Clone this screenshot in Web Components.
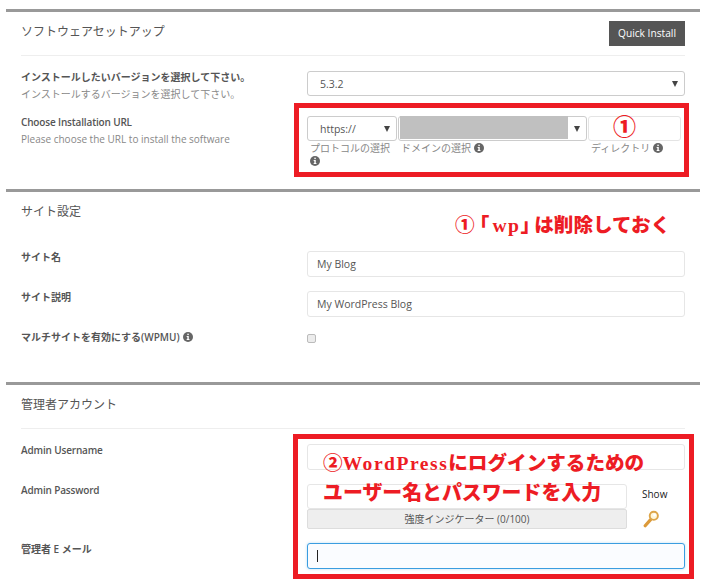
<!DOCTYPE html>
<html lang="ja">
<head>
<meta charset="utf-8">
<title>ソフトウェアセットアップ</title>
<style>
  html, body { margin: 0; background: #fff; }
  body {
    font-family: "Open Sans", "Noto Sans CJK JP", sans-serif;
    font-size: 10px;
    color: #555;
    overflow: hidden;
  }
</style>
</head>
<body>
<x-page>
  <x-section heading="ソフトウェアセットアップ" divided style="--row-gap: 20px">
    <x-button slot="action">Quick Install</x-button>
    <x-row>
      <x-label slot="label" hint="インストールするバージョンを選択して下さい。">インストールしたいバージョンを選択して下さい。</x-label>
      <x-select>5.3.2</x-select>
    </x-row>
    <x-row>
      <x-label slot="label" latin hint="Please choose the URL to install the software">Choose Installation URL</x-label>
      <x-url-group></x-url-group>
    </x-row>
  </x-section>

  <x-section heading="サイト設定" style="--row-gap: 14px; --pad-bottom: 38px">
    <x-row>
      <x-label slot="label">サイト名</x-label>
      <x-input>My Blog</x-input>
    </x-row>
    <x-row>
      <x-label slot="label">サイト説明</x-label>
      <x-input>My WordPress Blog</x-input>
    </x-row>
    <x-row>
      <x-label slot="label">マルチサイトを有効にする(WPMU) <x-info style="margin-left: 1px"></x-info></x-label>
      <x-checkbox></x-checkbox>
    </x-row>
  </x-section>

  <x-section heading="管理者アカウント" divided style="--row-gap: 14px">
    <x-row>
      <x-label slot="label" latin>Admin Username</x-label>
      <x-input></x-input>
    </x-row>
    <x-row>
      <x-label slot="label" latin>Admin Password</x-label>
      <x-password></x-password>
    </x-row>
    <x-row>
      <x-label slot="label">管理者 E メール</x-label>
      <x-input focused></x-input>
    </x-row>
  </x-section>

  <x-mark style="left:294px; top:103px; width:395px; height:74px"></x-mark>
  <x-mark style="left:293px; top:434px; width:401px; height:145px"></x-mark>
  <x-note style="left:613px; top:113px; font-size:23px">①</x-note>
  <x-note style="left:455px; top:211px">①<span class="open">「</span><span class="latin">wp</span><span class="close">」</span>は削除しておく</x-note>
  <x-note style="left:323px; top:449px">②<span class="latin">WordPress</span>にログインするための</x-note>
  <x-note style="left:323px; top:479px; font-size:19.9px">ユーザー名とパスワードを入力</x-note>
</x-page>

<script>
class XPage extends HTMLElement {
  constructor() {
    super();
    this.attachShadow({ mode: "open" });
    this.shadowRoot.innerHTML = `
      <style>
        :host { display: block; position: relative; width: 705px; height: 588px; padding-top: 9px; box-sizing: border-box; overflow: hidden; }
      </style>
      <slot></slot>`;
  }
}

class XSection extends HTMLElement {
  constructor() {
    super();
    this.attachShadow({ mode: "open" });
    this.shadowRoot.innerHTML = `
      <style>
        :host { display: block; margin: 0 5px 0 6px; border-top: 3px solid #999; padding: 0 15px var(--pad-bottom, 0); }
        .head { display: flex; justify-content: space-between; align-items: flex-start; height: 43px; border-bottom: 1px solid transparent; }
        :host([divided]) .head { border-bottom-color: #eee; }
        h2 { margin: 10px 0 0; font-size: 12px; line-height: 19px; font-weight: 400; color: #555; }
        .rows { display: flex; flex-direction: column; gap: var(--row-gap, 14px); padding-top: 15px; }
      </style>
      <div class="head">
        <h2></h2>
        <slot name="action"></slot>
      </div>
      <div class="rows"><slot></slot></div>`;
  }
  connectedCallback() {
    this.shadowRoot.querySelector("h2").textContent = this.getAttribute("heading");
  }
}

class XButton extends HTMLElement {
  constructor() {
    super();
    this.attachShadow({ mode: "open" });
    this.shadowRoot.innerHTML = `
      <style>
        :host { display: block; box-sizing: border-box; width: 76px; height: 25px; margin-top: 9px; background: #555; color: #fff; font-size: 10.2px; line-height: 25px; text-align: center; }
      </style>
      <slot></slot>`;
  }
}

class XRow extends HTMLElement {
  constructor() {
    super();
    this.attachShadow({ mode: "open" });
    this.shadowRoot.innerHTML = `
      <style>
        :host { display: grid; grid-template-columns: 286px 378px; align-items: start; }
      </style>
      <slot name="label"></slot>
      <div><slot></slot></div>`;
  }
}

class XLabel extends HTMLElement {
  constructor() {
    super();
    this.attachShadow({ mode: "open" });
    this.shadowRoot.innerHTML = `
      <style>
        :host { display: block; height: 13px; }
        .main { font-size: 10px; line-height: 13px; font-weight: 600; color: #555; }
        :host([latin]) .main { letter-spacing: -.16px; }
        .hint { margin-top: 4px; font-size: 10px; line-height: 13px; color: #888; }
        .hint:empty { display: none; }
      </style>
      <div class="main"><slot></slot></div>
      <div class="hint"></div>`;
  }
  connectedCallback() {
    this.shadowRoot.querySelector(".hint").textContent = this.getAttribute("hint") || "";
  }
}

class XInfo extends HTMLElement {
  constructor() {
    super();
    this.attachShadow({ mode: "open" });
    this.shadowRoot.innerHTML = `
      <style>
        :host { display: inline-block; width: 10px; height: 10px; vertical-align: -1px; }
        svg { display: block; }
      </style>
      <svg width="10" height="10" viewBox="0 0 9 9">
        <circle cx="4.5" cy="4.5" r="4.5" fill="#666"/>
        <rect x="3.9" y="1.5" width="1.3" height="1.3" fill="#fff"/>
        <path d="M3.3 3.6h1.9v2.6h.6v.9H3.3v-.9h.6V4.5h-.6z" fill="#fff"/>
      </svg>`;
  }
}

class XSelect extends HTMLElement {
  constructor() {
    super();
    this.attachShadow({ mode: "open" });
    this.shadowRoot.innerHTML = `
      <style>
        :host { display: flex; align-items: center; justify-content: space-between; box-sizing: border-box; height: 25px; padding: 0 6px 0 12px; background: #fff; border: 1px solid #ccc; border-radius: 3px; font-size: 10.5px; color: #555; position: relative; }
        i { width: 0; height: 0; border-left: 3px solid transparent; border-right: 3px solid transparent; border-top: 6px solid #444; }
      </style>
      <span><slot></slot></span><i></i>`;
  }
}

class XUrlGroup extends HTMLElement {
  constructor() {
    super();
    this.attachShadow({ mode: "open" });
    this.shadowRoot.innerHTML = `
      <style>
        :host { display: grid; grid-template-columns: 90px 189px 93px; column-gap: 1px; height: 73px; }
        p { margin: 1px 0 0 3px; font-size: 10px; line-height: 13px; color: #888; }
        .domain { position: relative; }
        .mask { position: absolute; left: 2px; top: 0; width: 168px; height: 23px; background: #c0c0c0; }
      </style>
      <div><x-select>https://</x-select><p>プロトコルの選択 <x-info></x-info></p></div>
      <div class="domain"><x-select></x-select><div class="mask"></div><p>ドメインの選択 <x-info></x-info></p></div>
      <div><x-input style="--field-border: #e4e4e4; height: 25px"></x-input><p>ディレクトリ <x-info></x-info></p></div>`;
  }
}

class XInput extends HTMLElement {
  constructor() {
    super();
    this.attachShadow({ mode: "open" });
    this.shadowRoot.innerHTML = `
      <style>
        :host { display: flex; align-items: center; box-sizing: border-box; height: 26px; padding: 0 9px; background: #fff; border: 1px solid var(--field-border, #e6e6e6); border-radius: 3px; font-size: 10.5px; color: #555; }
        :host([focused]) { border-color: #3a9de0; background: #fafcff; box-shadow: 0 0 3px rgba(58,157,224,.35); }
        b { display: none; width: 1px; height: 12px; background: #222; }
        :host([focused]) b { display: block; }
      </style>
      <b></b><slot></slot>`;
  }
}

class XCheckbox extends HTMLElement {
  constructor() {
    super();
    this.attachShadow({ mode: "open" });
    this.shadowRoot.innerHTML = `
      <style>
        :host { display: block; box-sizing: border-box; width: 9px; height: 9px; margin-top: 3px; background: #ececec; border: 1px solid #bbb; border-radius: 2px; }
      </style>`;
  }
}

class XPassword extends HTMLElement {
  constructor() {
    super();
    this.attachShadow({ mode: "open" });
    this.shadowRoot.innerHTML = `
      <style>
        :host { display: grid; grid-template-columns: 320px 58px; }
        .meter { box-sizing: border-box; height: 20px; background: #eee; border: 1px solid #ddd; border-radius: 2px; font-size: 10px; line-height: 18px; text-align: center; color: #555; }
        .show { padding-left: 15px; font-size: 10px; line-height: 21px; color: #222; }
        .key { padding-left: 16px; height: 20px; }
        svg { display: block; }
      </style>
      <x-input style="height: 25px"></x-input>
      <div class="show">Show</div>
      <div class="meter">強度インジケーター (0/100)</div>
      <div class="key">
        <svg width="16" height="19" viewBox="0 0 16 19">
          <path d="M7.6 10.6 2.2 16.8" stroke="#dc9a3a" stroke-width="3.2" stroke-linecap="round" fill="none"/>
          <circle cx="10.8" cy="6.8" r="4.1" fill="#fff6d8" stroke="#dda548" stroke-width="1.9"/>
          <circle cx="11.6" cy="6" r="1.4" fill="#fff"/>
        </svg>
      </div>`;
  }
}

// overlays added on the screenshot by hand: frames and red remarks
class XMark extends HTMLElement {
  constructor() {
    super();
    this.attachShadow({ mode: "open" });
    this.shadowRoot.innerHTML = `
      <style>
        :host { display: block; position: absolute; box-sizing: border-box; border: 5px solid #ed1c24; pointer-events: none; }
      </style>`;
  }
}

class XNote extends HTMLElement {
  constructor() {
    super();
    this.attachShadow({ mode: "open" });
    this.shadowRoot.innerHTML = `
      <style>
        :host { display: block; position: absolute; white-space: nowrap; font-family: "Liberation Serif", "Noto Sans CJK JP", serif; font-size: 19.6px; line-height: 29px; font-weight: 900; color: #ed1c24; }
        ::slotted(.latin) { letter-spacing: 1.5px; }
        ::slotted(.open) { font-feature-settings: "halt"; margin: 0 3px 0 5px; }
        ::slotted(.close) { font-feature-settings: "halt"; margin-right: 4px; }
      </style>
      <slot></slot>`;
  }
}

customElements.define("x-page", XPage);
customElements.define("x-section", XSection);
customElements.define("x-button", XButton);
customElements.define("x-row", XRow);
customElements.define("x-label", XLabel);
customElements.define("x-info", XInfo);
customElements.define("x-select", XSelect);
customElements.define("x-url-group", XUrlGroup);
customElements.define("x-input", XInput);
customElements.define("x-checkbox", XCheckbox);
customElements.define("x-password", XPassword);
customElements.define("x-mark", XMark);
customElements.define("x-note", XNote);
</script>
</body>
</html>
